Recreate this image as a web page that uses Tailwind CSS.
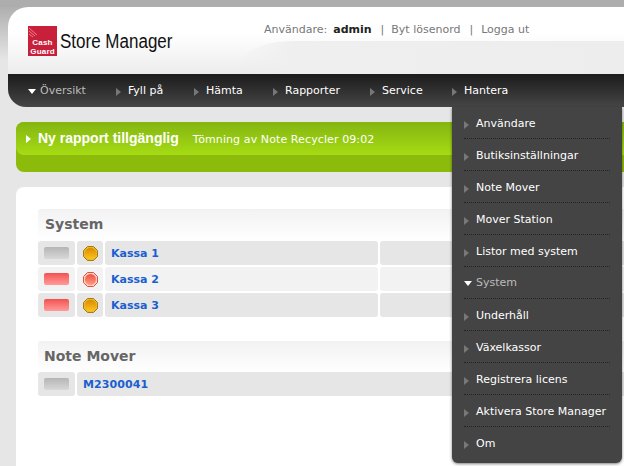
<!DOCTYPE html>
<html lang="en">
<head>
    <meta charset="UTF-8">
    <script src="https://cdn.jsdelivr.net/npm/@tailwindcss/browser@4"></script>
    <title>Store Manager</title>
</head>
<body class="w-[624px] h-[466px] overflow-hidden relative bg-[#e6e6e6] font-['DejaVu_Sans',sans-serif] text-[11px]">
    <div class="h-[60px] w-full absolute top-0 left-0 bg-gradient-to-b from-[#a8a8a8] to-[#e6e6e6]"></div>
    <div class="h-[7px] w-full absolute top-0 left-0 bg-[#adadad]"></div>

    <div class="relative pt-[7px] pl-2">
        <!-- header -->
        <div class="h-[67px] relative bg-gradient-to-b from-white from-40% to-[#ececec] rounded-tl-[20px] overflow-hidden">
            <svg class="absolute left-0 top-0" width="616" height="67">
                <defs>
                    <linearGradient id="sw" x1="0" y1="0" x2="1" y2="0">
                        <stop offset="0" stop-color="#eeeeee" stop-opacity="0"/>
                        <stop offset="0.15" stop-color="#efefef"/>
                        <stop offset="1" stop-color="#ededed"/>
                    </linearGradient>
                </defs>
                <path d="M226 67 C235 44 250 34 290 34 L616 34 L616 67 Z" fill="url(#sw)"/>
            </svg>
            <div class="absolute left-5 top-[19px] flex items-center gap-[3px]">
                <div class="relative w-[29px] h-[30px] bg-[#c8203a] flex flex-col justify-end items-center leading-[9px] text-white font-bold font-['Liberation_Sans',sans-serif] text-[8px] tracking-[0.2px]">
                    <svg class="absolute left-0 top-0" width="12" height="12" fill="none" stroke="#e8808e" stroke-width="1">
                        <path d="M1 2 L9 9 M1 5 L7 10 M1 8 L5 11"/>
                    </svg>
                    <span>Cash</span>
                    <span>Guard</span>
                </div>
                <span class="text-[20px] leading-6 text-[#111] font-['Liberation_Sans',sans-serif] inline-block w-[113px] whitespace-nowrap origin-left scale-x-[0.85]">Store Manager</span>
            </div>
            <div class="absolute left-[256px] top-[16px] flex items-center h-[14px] text-[#777] whitespace-nowrap">
                <span>Användare:</span>
                <b class="ml-[6px] text-[#222]">admin</b>
                <span class="ml-[9px]">|</span>
                <span class="ml-[7px]">Byt lösenord</span>
                <span class="ml-[9px]">|</span>
                <span class="ml-[8px]">Logga ut</span>
            </div>
        </div>
        <!-- nav -->
        <div class="h-[33px] flex items-center pl-5 pt-[2px] text-white bg-gradient-to-b from-[#1c1c1c] to-[#464646] rounded-bl-[18px] whitespace-nowrap">
            <div class="w-[88px] flex items-center text-[#bbb]">
                <span class="w-0 h-0 border-x-[4px] border-x-transparent border-t-[5px] border-t-white mr-[4px]"></span>Översikt
            </div>
            <div class="w-[78px] flex items-center">
                <span class="w-0 h-0 border-y-[4px] border-y-transparent border-l-[5px] border-l-[#777] mr-[7px]"></span>Fyll på
            </div>
            <div class="w-[79px] flex items-center">
                <span class="w-0 h-0 border-y-[4px] border-y-transparent border-l-[5px] border-l-[#777] mr-[7px]"></span>Hämta
            </div>
            <div class="w-[97px] flex items-center">
                <span class="w-0 h-0 border-y-[4px] border-y-transparent border-l-[5px] border-l-[#777] mr-[7px]"></span>Rapporter
            </div>
            <div class="w-[82px] flex items-center">
                <span class="w-0 h-0 border-y-[4px] border-y-transparent border-l-[5px] border-l-[#777] mr-[7px]"></span>Service
            </div>
            <div class="flex items-center">
                <span class="w-0 h-0 border-y-[4px] border-y-transparent border-l-[5px] border-l-[#777] mr-[7px]"></span>Hantera
            </div>
        </div>
    </div>

    <!-- banner -->
    <div class="ml-4 mt-[15px] h-[50px] bg-[#8dbb0c] rounded-l-[8px] overflow-hidden">
        <div class="h-[33px] flex items-center pl-[10px] rounded-bl-[8px] text-white bg-gradient-to-b from-[#84b511] to-[#a6dc14] whitespace-nowrap">
            <span class="w-0 h-0 border-y-[4px] border-y-transparent border-l-[5px] border-l-white mr-[7px]"></span>
            <b class="text-[14px] font-['Liberation_Sans',sans-serif]">Ny rapport tillgänglig</b>
            <span class="ml-[14px] pt-[4px] tracking-[0.1px]">Tömning av Note Recycler 09:02</span>
        </div>
    </div>

    <!-- content -->
    <div class="ml-4 mt-[15px] h-[279px] bg-white rounded-tl-[8px] pl-[22px] pt-[22px]">
        <div class="h-[32px] pl-[7px] pb-[2px] flex items-center bg-gradient-to-b from-[#f2f2f2] to-white rounded-tl-[3px] text-[14px] font-bold text-[#666]">System</div>
        <div class="flex flex-col gap-[2px] text-[11px] font-bold text-[#1a5fd0]">
            <div class="h-6 flex gap-[2px]">
                <div class="w-[37px] bg-[#e6e6e6] rounded-[3px] flex items-center justify-center"><div class="w-[25px] h-[12px] rounded-[2px] bg-gradient-to-b from-[#b5b5b5] to-[#d8d8d8]"></div></div>
                <div class="w-[26px] bg-[#e6e6e6] rounded-[3px] flex items-center justify-center">
                    <svg width="15" height="15" viewBox="0 0 15 15">
                        <defs><linearGradient id="amber" x1="0" y1="0" x2="0" y2="1"><stop offset="0" stop-color="#d88a00"/><stop offset="1" stop-color="#ffc41f"/></linearGradient></defs>
                        <polygon points="4.5,0.5 10.5,0.5 14.5,4.5 14.5,10.5 10.5,14.5 4.5,14.5 0.5,10.5 0.5,4.5" fill="#e8b830" stroke="#a87a10"/>
                        <circle cx="7.5" cy="7.5" r="5.8" fill="url(#amber)"/>
                    </svg>
                </div>
                <div class="w-[273px] bg-[#e6e6e6] rounded-[3px] flex items-center pl-[6px] pt-[2px]">Kassa 1</div>
                <div class="flex-1 bg-[#e6e6e6] rounded-l-[3px]"></div>
            </div>
            <div class="h-6 flex gap-[2px]">
                <div class="w-[37px] bg-[#f2f2f2] rounded-[3px] flex items-center justify-center"><div class="w-[25px] h-[12px] rounded-[2px] bg-gradient-to-b from-[#f24f4f] to-[#ff9a9a]"></div></div>
                <div class="w-[26px] bg-[#f2f2f2] rounded-[3px] flex items-center justify-center">
                    <svg width="15" height="15" viewBox="0 0 15 15">
                        <defs><linearGradient id="red" x1="0" y1="0" x2="0" y2="1"><stop offset="0" stop-color="#ee5240"/><stop offset="1" stop-color="#ff9a80"/></linearGradient></defs>
                        <polygon points="4.5,0.5 10.5,0.5 14.5,4.5 14.5,10.5 10.5,14.5 4.5,14.5 0.5,10.5 0.5,4.5" fill="#ffd0c8" stroke="#e0503c"/>
                        <circle cx="7.5" cy="7.5" r="5.5" fill="url(#red)"/>
                    </svg>
                </div>
                <div class="w-[273px] bg-[#f2f2f2] rounded-[3px] flex items-center pl-[6px] pt-[2px]">Kassa 2</div>
                <div class="flex-1 bg-[#f2f2f2] rounded-l-[3px]"></div>
            </div>
            <div class="h-6 flex gap-[2px]">
                <div class="w-[37px] bg-[#e6e6e6] rounded-[3px] flex items-center justify-center"><div class="w-[25px] h-[12px] rounded-[2px] bg-gradient-to-b from-[#f24f4f] to-[#ff9a9a]"></div></div>
                <div class="w-[26px] bg-[#e6e6e6] rounded-[3px] flex items-center justify-center">
                    <svg width="15" height="15" viewBox="0 0 15 15">
                        <polygon points="4.5,0.5 10.5,0.5 14.5,4.5 14.5,10.5 10.5,14.5 4.5,14.5 0.5,10.5 0.5,4.5" fill="#e8b830" stroke="#a87a10"/>
                        <circle cx="7.5" cy="7.5" r="5.8" fill="url(#amber)"/>
                    </svg>
                </div>
                <div class="w-[273px] bg-[#e6e6e6] rounded-[3px] flex items-center pl-[6px] pt-[2px]">Kassa 3</div>
                <div class="flex-1 bg-[#e6e6e6] rounded-l-[3px]"></div>
            </div>
        </div>
        <div class="mt-6 h-[31px] pl-[6px] flex items-center bg-gradient-to-b from-[#f2f2f2] to-white rounded-tl-[3px] text-[14px] font-bold text-[#666]">Note Mover</div>
        <div class="h-6 flex gap-[2px] font-bold text-[#1a5fd0]">
            <div class="w-[37px] bg-[#e6e6e6] rounded-[3px] flex items-center justify-center"><div class="w-[25px] h-[12px] rounded-[2px] bg-gradient-to-b from-[#b5b5b5] to-[#d8d8d8]"></div></div>
            <div class="flex-1 bg-[#e6e6e6] rounded-l-[3px] flex items-center pl-[6px] pt-[2px] tracking-[0.1px]">M2300041</div>
        </div>
    </div>

    <!-- dropdown -->
    <div class="absolute left-[452px] top-[107px] w-[170px] h-[356px] bg-[#444] rounded-b-[6px] shadow-[0_1px_3px_rgba(0,0,0,0.5)] px-3 text-white whitespace-nowrap">
        <div class="h-[32px] pt-[4px] flex items-center border-b border-dotted border-[#222]"><span class="w-0 h-0 border-y-[4px] border-y-transparent border-l-[5px] border-l-[#777] mr-[7px]"></span>Användare</div>
        <div class="h-[32px] pt-[4px] flex items-center border-b border-dotted border-[#222]"><span class="w-0 h-0 border-y-[4px] border-y-transparent border-l-[5px] border-l-[#777] mr-[7px]"></span>Butiksinställningar</div>
        <div class="h-[32px] pt-[4px] flex items-center border-b border-dotted border-[#222]"><span class="w-0 h-0 border-y-[4px] border-y-transparent border-l-[5px] border-l-[#777] mr-[7px]"></span>Note Mover</div>
        <div class="h-[32px] pt-[4px] flex items-center border-b border-dotted border-[#222]"><span class="w-0 h-0 border-y-[4px] border-y-transparent border-l-[5px] border-l-[#777] mr-[7px]"></span>Mover Station</div>
        <div class="h-[32px] pt-[4px] flex items-center border-b border-dotted border-[#222]"><span class="w-0 h-0 border-y-[4px] border-y-transparent border-l-[5px] border-l-[#777] mr-[7px]"></span>Listor med system</div>
        <div class="h-[32px] pt-[2px] flex items-center border-b border-dotted border-[#222] text-[#bbb]"><span class="w-0 h-0 border-x-[4px] border-x-transparent border-t-[5px] border-t-white mr-[4px]"></span>System</div>
        <div class="h-[32px] pt-[4px] flex items-center border-b border-dotted border-[#222]"><span class="w-0 h-0 border-y-[4px] border-y-transparent border-l-[5px] border-l-[#777] mr-[7px]"></span>Underhåll</div>
        <div class="h-[32px] pt-[4px] flex items-center border-b border-dotted border-[#222]"><span class="w-0 h-0 border-y-[4px] border-y-transparent border-l-[5px] border-l-[#777] mr-[7px]"></span>Växelkassor</div>
        <div class="h-[32px] pt-[4px] flex items-center border-b border-dotted border-[#222]"><span class="w-0 h-0 border-y-[4px] border-y-transparent border-l-[5px] border-l-[#777] mr-[7px]"></span>Registrera licens</div>
        <div class="h-[32px] pt-[4px] flex items-center border-b border-dotted border-[#222]"><span class="w-0 h-0 border-y-[4px] border-y-transparent border-l-[5px] border-l-[#777] mr-[7px]"></span>Aktivera Store Manager</div>
        <div class="h-[32px] pt-[3px] flex items-center"><span class="w-0 h-0 border-y-[4px] border-y-transparent border-l-[5px] border-l-[#777] mr-[7px]"></span>Om</div>
    </div>
</body>
</html>
